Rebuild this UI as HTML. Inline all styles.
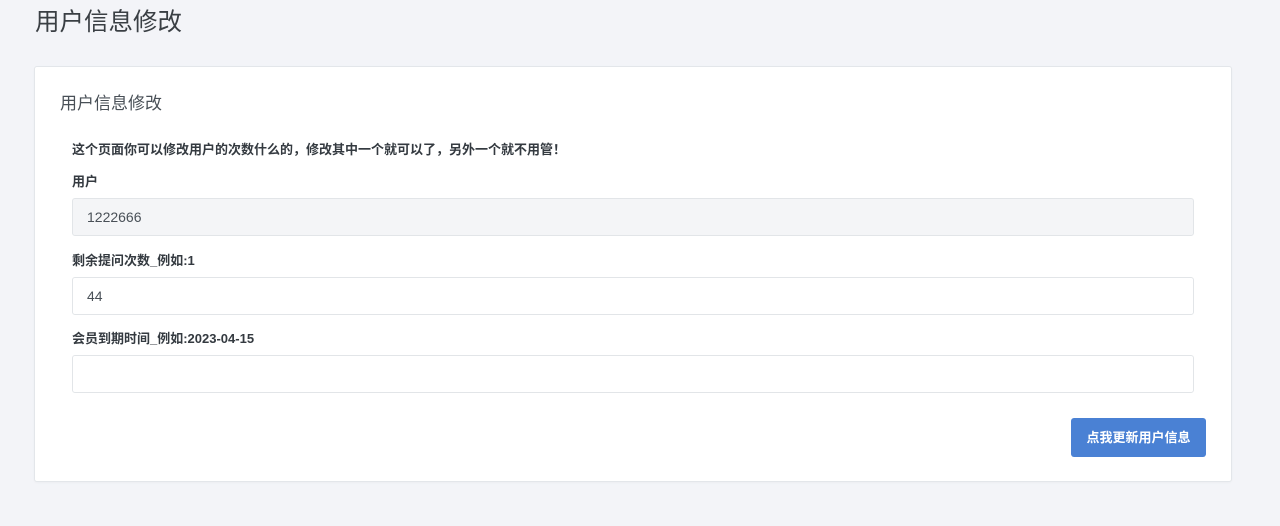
<!DOCTYPE html>
<html><head><meta charset="utf-8"><style>
body{margin:0;background:#f3f4f8;font-family:"Liberation Sans","Noto Sans CJK SC",sans-serif;color:#343a40;width:1280px;height:526px;overflow:hidden;position:relative}
.h{position:absolute;left:35px;top:6px;font-size:24.5px;color:#3a3f44;line-height:34px}
.card{position:absolute;left:34px;top:66px;width:1196px;height:414px;background:#fff;border:1px solid #e3e6ea;border-radius:3px;box-shadow:0 1px 2px rgba(0,0,0,.03)}
.ct{position:absolute;left:25px;top:25px;font-size:17px;color:#495057;line-height:24px}
.t{position:absolute;left:37px;font-size:13px;font-weight:bold;color:#343a40;line-height:18px}
.in{position:absolute;left:37px;width:1122px;height:38px;border:1px solid #e2e5e8;border-radius:3px;box-sizing:border-box;font-size:14px;color:#495057;line-height:36px;padding-left:14px}
.btn{position:absolute;left:1036px;top:351px;width:135px;height:39px;background:#4a81d4;border-radius:3px;color:#fff;font-size:13px;font-weight:bold;text-align:center;line-height:39px}
</style></head><body>
<div class="h">用户信息修改</div>
<div class="card">
<div class="ct">用户信息修改</div>
<div class="t" style="top:74px">这个页面你可以修改用户的次数什么的，修改其中一个就可以了，另外一个就不用管！</div>
<div class="t" style="top:106px">用户</div>
<div class="in" style="top:131px;background:#f4f5f7">1222666</div>
<div class="t" style="top:185px">剩余提问次数_例如:1</div>
<div class="in" style="top:210px">44</div>
<div class="t" style="top:263px">会员到期时间_例如:2023-04-15</div>
<div class="in" style="top:288px"></div>
<div class="btn">点我更新用户信息</div>
</div>
</body></html>
